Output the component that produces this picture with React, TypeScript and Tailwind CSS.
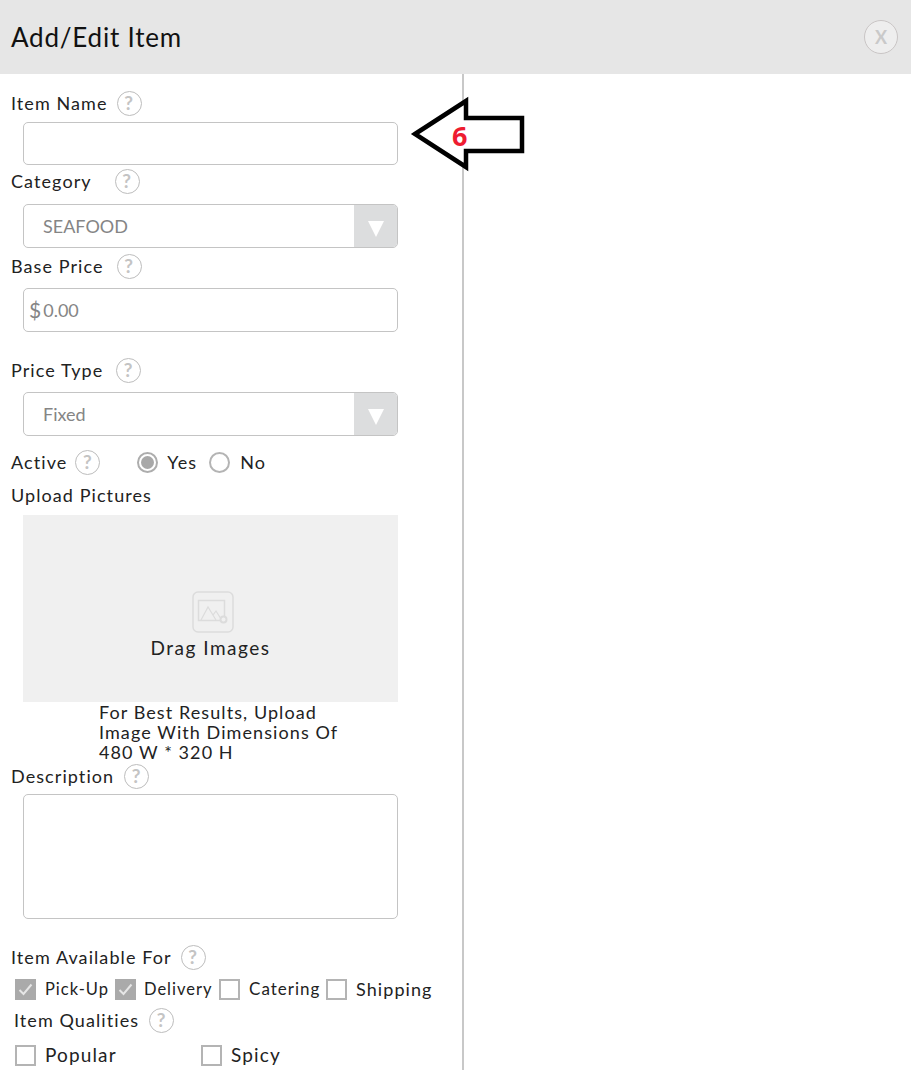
import { ReactNode } from "react";

function Help({ className = "" }: { className?: string }) {
  return (
    <span
      className={`flex h-[25px] w-[25px] shrink-0 items-center justify-center rounded-full border border-[#bdbdbd] bg-white text-[19px] font-bold text-[#c4c4c4] ${className}`}
    >
      ?
    </span>
  );
}

function Label({ children, className = "" }: { children: ReactNode; className?: string }) {
  return (
    <div className={`flex h-[25px] items-center text-[18px] tracking-[0.06em] text-[#222] ${className}`}>
      {children}
    </div>
  );
}

function Select({ value, className = "" }: { value: string; className?: string }) {
  return (
    <div
      className={`ml-[23px] flex h-[44px] w-[375px] items-center justify-between overflow-hidden rounded-[5px] border border-[#c4c4c4] bg-white ${className}`}
    >
      <span className="pl-[19px] text-[18px] text-[#858585]">{value}</span>
      <span className="flex h-full w-[43px] items-center justify-center bg-[#dcddde] pt-[6px]">
        <svg width="16" height="16" viewBox="0 0 16 16">
          <path d="M0 0H16L8 16Z" fill="#fff" />
        </svg>
      </span>
    </div>
  );
}

function Check({
  label,
  checked = false,
  className = "",
  textClass = "ml-[9px] text-[17px]",
}: {
  label: string;
  checked?: boolean;
  className?: string;
  textClass?: string;
}) {
  return (
    <div className={`flex items-center ${className}`}>
      <span
        className={`flex h-[21px] w-[21px] shrink-0 items-center justify-center border-2 ${
          checked ? "border-[#aaaaaa] bg-[#aaaaaa]" : "border-[#b4b4b4] bg-white"
        }`}
      >
        {checked && (
          <svg width="15" height="13" viewBox="0 0 15 13" fill="none">
            <path d="M1.5 7L5.5 11L13.5 1.5" stroke="#e6e6e6" strokeWidth="2" />
          </svg>
        )}
      </span>
      <span className={`tracking-[0.06em] text-[#222] ${textClass}`}>{label}</span>
    </div>
  );
}

export default function App() {
  return (
    <div className="relative h-[1070px] w-[911px] overflow-hidden bg-white font-['Lato',sans-serif]">
      <header className="flex h-[74px] items-center justify-between bg-[#e6e6e6] pl-[11px] pr-[13px]">
        <h1 className="text-[26px] tracking-[0.03em] text-[#111]">Add/Edit Item</h1>
        <button className="flex h-[34px] w-[34px] items-center justify-center rounded-full border border-[#c9c5c5] bg-[#eeeeee] text-[18px] font-bold text-[#c9c9c9]">
          X
        </button>
      </header>

      <div className="h-[996px] w-[464px] border-r-2 border-[#c8c8c8] pt-[17px]">
        <Label className="pl-[11px]">
          Item Name <Help className="ml-[9px]" />
        </Label>
        <div className="ml-[23px] mt-[6px] h-[43px] w-[375px] rounded-[5px] border border-[#c4c4c4]" />

        <Label className="mt-[4px] pl-[11px]">
          Category <Help className="ml-[23px]" />
        </Label>
        <Select value="SEAFOOD" className="mt-[10px]" />

        <Label className="mt-[6px] pl-[11px]">
          Base Price <Help className="ml-[13px]" />
        </Label>
        <div className="ml-[23px] mt-[9px] flex h-[44px] w-[375px] items-center rounded-[5px] border border-[#c4c4c4] pl-[5px] text-[18px] text-[#858585]">
          <span className="mr-[2px] text-[21px]">$</span>0.00
        </div>

        <Label className="mt-[26px] pl-[11px]">
          Price Type <Help className="ml-[13px]" />
        </Label>
        <Select value="Fixed" className="mt-[9px]" />

        <Label className="mt-[14px] pl-[11px]">
          Active <Help className="ml-[8px]" />
          <span className="ml-[37px] flex h-[21px] w-[21px] items-center justify-center rounded-full border-2 border-[#adadad]">
            <span className="h-[13px] w-[13px] rounded-full bg-[#a8a8a8]" />
          </span>
          <span className="ml-[9px]">Yes</span>
          <span className="ml-[12px] h-[21px] w-[21px] rounded-full border-2 border-[#b4b4b4]" />
          <span className="ml-[10px]">No</span>
        </Label>

        <Label className="mt-[8px] pl-[11px]">Upload Pictures</Label>
        <div className="ml-[23px] mt-[7px] flex h-[187px] w-[375px] flex-col items-center justify-center bg-[#f0f0f0] pt-[35px]">
          <svg width="42" height="42" viewBox="0 0 42 42" fill="none" stroke="#dcdcdc" className="ml-[5px]">
            <rect x="1" y="1" width="40" height="40" rx="5" strokeWidth="1.5" />
            <rect x="6.5" y="9.5" width="26" height="20" strokeWidth="1.5" />
            <path d="M9 29L16 16L24 29M21 24L24 20L29 28" strokeWidth="1.2" />
            <circle cx="31.5" cy="28.5" r="3" fill="#f0f0f0" strokeWidth="2" />
          </svg>
          <span className="mt-[2px] text-[19px] leading-[26px] tracking-[0.08em] text-[#222]">Drag Images</span>
        </div>
        <p className="ml-[99px] w-[300px] text-[18px] leading-[20px] tracking-[0.06em] text-[#222]">
          For Best Results, Upload
          <br />
          Image With Dimensions Of
          <br />
          480 W * 320 H
        </p>

        <Label className="mt-[2px] pl-[11px]">
          Description <Help className="ml-[10px]" />
        </Label>
        <div className="ml-[23px] mt-[5px] h-[125px] w-[375px] rounded-[5px] border border-[#c4c4c4]" />

        <Label className="mt-[26px] pl-[11px]">
          Item Available For <Help className="ml-[9px]" />
        </Label>
        <div className="ml-[15px] mt-[8px] flex h-[22px] items-center">
          <Check label="Pick-Up" checked className="w-[100px]" textClass="ml-[9px] text-[16.5px]" />
          <Check label="Delivery" checked className="w-[104px]" textClass="ml-[8px] text-[16.5px]" />
          <Check label="Catering" className="w-[107px]" />
          <Check label="Shipping" textClass="ml-[9px] text-[18px]" />
        </div>

        <Label className="mt-[8px] pl-[14px]">
          Item Qualities <Help className="ml-[10px]" />
        </Label>
        <div className="ml-[15px] mt-[11px] flex h-[22px] items-center">
          <Check label="Popular" className="w-[186px]" textClass="ml-[9px] text-[19px]" />
          <Check label="Spicy" textClass="ml-[9px] text-[19px]" />
        </div>
      </div>

      {/* annotation arrow on top of the form */}
      <div className="absolute left-[410px] top-[96px] h-[76px] w-[118px]">
        <svg width="118" height="76" viewBox="0 0 118 76" className="absolute inset-0">
          <path
            d="M5 38L56 5V22H112V55H56V71Z"
            fill="#fff"
            stroke="#000"
            strokeWidth="4.5"
            strokeLinejoin="miter"
          />
        </svg>
        <span className="absolute left-[42px] top-[21px] font-['Open_Sans',sans-serif] text-[27px] font-bold leading-[38px] text-[#ee1c30]">
          6
        </span>
      </div>
    </div>
  );
}
